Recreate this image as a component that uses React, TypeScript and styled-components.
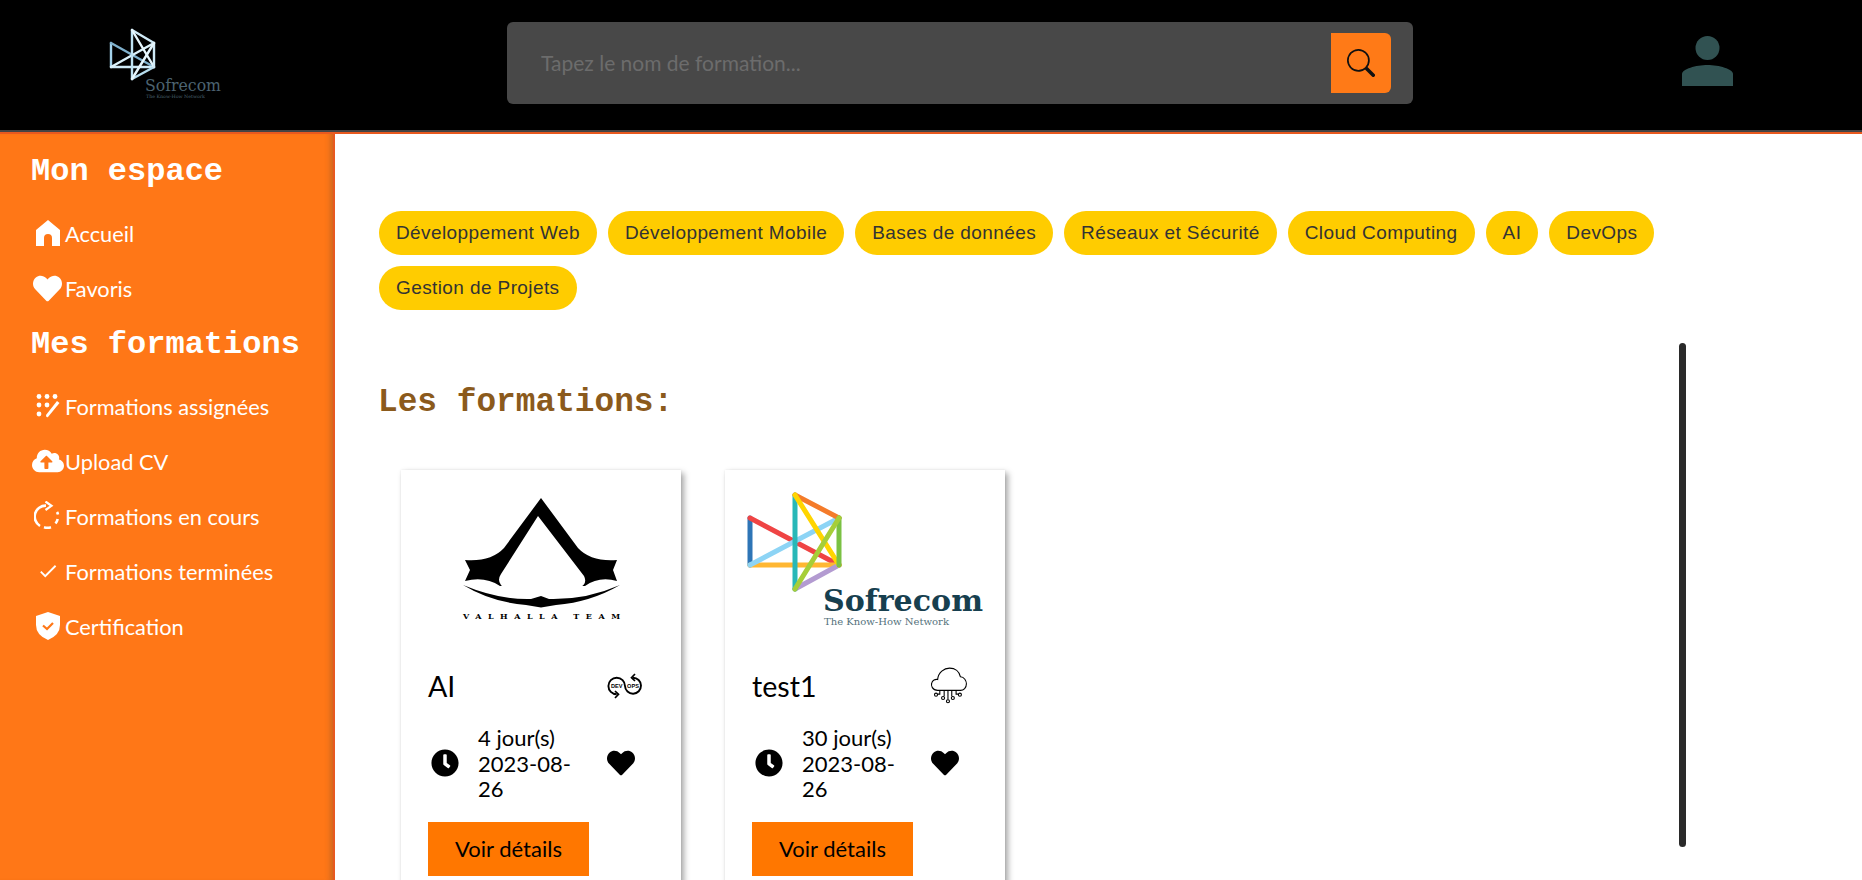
import React from 'react';
import styled, {createGlobalStyle} from 'styled-components';
import {BsSearch} from 'react-icons/bs';
import {FaClock, FaCloudUploadAlt, FaHeart} from 'react-icons/fa';
import {MdCheck} from 'react-icons/md';

const GlobalStyle = createGlobalStyle`
	html, body {
		margin   : 0;
		padding  : 0;
		height   : 880px;
		overflow : hidden;
		background-color : #fff;
		font-family : Lato, "Open Sans", sans-serif;
	}
`;

const Page = styled.div`
	display        : flex;
	flex-direction : column;
	height         : 880px;
	overflow       : hidden;
`;
const Header = styled.header`
	display               : grid;
	grid-template-columns : 507px 906px 1fr;
	align-items           : center;
	flex-shrink           : 0;
	height                : 130px;
	background-color      : #000;
	border-bottom         : 2px solid #444;
`;
const HeaderLogo = styled.svg`
	display     : block;
	margin-left : 105px;
	width       : 125px;
	height      : 75px;
	margin-top  : -4px;
`;
const SearchBar = styled.div`
	display          : flex;
	align-items      : center;
	justify-content  : space-between;
	height           : 82px;
	padding          : 0 22px 0 32px;
	background-color : #484848;
	border-radius    : 6px;
	margin-top       : -5px;
`;
const SearchInput = styled.input`
	flex             : 1;
	border           : 0;
	outline          : none;
	background-color : transparent;
	font-family      : Lato, sans-serif;
	font-size        : 21px;
	color            : #eee;
	&::placeholder {
		color : #6c6c6c;
	}
`;
const SearchButton = styled.button`
	display          : flex;
	align-items      : center;
	justify-content  : center;
	width            : 60px;
	height           : 60px;
	padding          : 0;
	border           : 0;
	border-radius    : 0 6px 6px 0;
	background-color : #ff7a17;
	color            : #111;
`;
const ProfileSlot = styled.div`
	padding-left : 269px;
	display      : flex;
	margin-top   : -8px;
`;
const Body = styled.div`
	display    : flex;
	flex       : 1;
	min-height : 0;
	border-top : 2px solid #e8591f;
`;
const SideMenu = styled.aside`
	flex-shrink      : 0;
	width            : 333px;
	padding-top      : 10px;
	background-color : #ff7717;
	border-right     : 2px solid #e8591f;
	box-shadow       : inset -7px 0 6px -5px rgba(60, 60, 60, 0.3);
`;
const MenuTitle = styled.h2`
	display      : flex;
	align-items  : center;
	height       : 55px;
	margin       : 0 0 8px;
	padding-left : 31px;
	font-family  : "Liberation Mono", monospace;
	font-weight  : 700;
	font-size    : 32px;
	color        : #fff;
`;
const MenuRow = styled.div`
	display     : grid;
	grid-template-columns : 35px 1fr;
	align-items : center;
	box-sizing  : border-box;
	height      : 55px;
	padding     : 0 0 3px 30px;
	font-size   : 21.8px;
	color       : #fff;
`;
const MenuIcon = styled.span`
	display         : flex;
	align-items     : center;
	justify-content : center;
	color           : #fff;
`;
const Content = styled.main`
	position : relative;
	flex     : 1;
	overflow : hidden;
	padding  : 77px 0 0 44px;
`;
const Chips = styled.div`
	display   : flex;
	flex-wrap : wrap;
	gap       : 11px;
	width     : 1300px;
`;
const Chip = styled.span`
	display          : inline-flex;
	align-items      : center;
	height           : 44px;
	padding          : 0 17px;
	border-radius    : 22px;
	background-color : #fc0;
	font-family      : "Liberation Sans", Arial, sans-serif;
	font-size        : 19px;
	letter-spacing   : 0.4px;
	color            : #333;
`;
const SectionTitle = styled.h2`
	margin      : 73px 0 0 -1px;
	height      : 40px;
	line-height : 40px;
	font-family : "Liberation Mono", monospace;
	font-weight : 700;
	font-size   : 32.8px;
	color       : #8b5a1c;
`;
const Cards = styled.div`
	display     : flex;
	gap         : 44px;
	margin-left : 22px;
	margin-top  : 47px;
`;
const Card = styled.article`
	flex-shrink : 0;
	width       : 280px;
	height      : 430px;
	background-color : #fff;
	box-shadow  : 3px 3px 6px rgba(0, 0, 0, 0.35), 0 0 2px rgba(0, 0, 0, 0.08);
`;
const CardImage = styled.svg`
	display : block;
	width   : 280px;
	height  : 185px;
`;
const CardLine = styled.div`
	display         : flex;
	align-items     : center;
	justify-content : space-between;
	height          : 64px;
	padding         : 0 38px 2px 27px;
	box-sizing      : border-box;
`;
const CardTitle = styled.div`
	font-size : 28.6px;
	color     : #000;
`;
const CardInfo = styled.div`
	display     : grid;
	grid-template-columns : 30px 106px 1fr;
	column-gap  : 17px;
	align-items : center;
	margin-top  : 6px;
	padding     : 0 0 0 30px;
	font-size   : 22px;
	line-height : 25.5px;
	color       : #000;
`;
const InfoText = styled.div`
	width : 106px;
`;
const HeartSlot = styled.span`
	display      : flex;
	padding-left : 6px;
`;
const DetailButton = styled.button`
	display          : block;
	width            : 161px;
	height           : 54px;
	margin           : 20px 0 0 27px;
	border           : 0;
	background-color : #ff7700;
	font-family      : Lato, sans-serif;
	font-size        : 22px;
	color            : #000;
`;
const ScrollThumb = styled.div`
	position         : absolute;
	left             : 1344px;
	top              : 209px;
	width            : 7px;
	height           : 504px;
	border-radius    : 4px;
	background-color : #2a2a2a;
`;

const CHIPS = ['Développement Web', 'Développement Mobile', 'Bases de données', 'Réseaux et Sécurité', 'Cloud Computing', 'AI', 'DevOps', 'Gestion de Projets'];

const HomeIcon = () => <svg width="24" height="26" viewBox="0 0 24 26">
	<path fill="currentColor" d="M12 0 L24 10 V26 H16 V18 Q16 14 12 14 Q8 14 8 18 V26 H0 V10 Z"/>
</svg>;
const AssignedIcon = () => <svg width="24" height="24" viewBox="0 0 24 24" fill="currentColor">
	<circle cx="3" cy="2.5" r="2.4"/><circle cx="11" cy="2.5" r="2.4"/><circle cx="19" cy="2.5" r="2.4"/>
	<circle cx="3" cy="11" r="2.4"/><circle cx="11" cy="11" r="2.4"/>
	<circle cx="3" cy="20" r="2.4"/>
	<path d="M21 7 L23.5 9 L12 23 Q10 24 10 21 Z"/>
</svg>;
const LoopIcon = () => <svg width="27" height="30" viewBox="0 0 27 30" fill="none" stroke="currentColor" strokeWidth="2.6">
	<path d="M12 4.6 A11 11 0 0 0 6 25"/>
	<path d="M10 26.2 A11 11 0 0 0 17 26.2"/>
	<path d="M21.5 22.5 A11 11 0 0 0 23.7 18"/>
	<path d="M24 13.5 A11 11 0 0 0 23 11"/>
	<path d="M11.5 0.5 L17.5 4.8 L11.5 9" strokeWidth="2.2"/>
</svg>;
const ShieldIcon = () => <svg width="24" height="28" viewBox="0 0 24 28">
	<path fill="currentColor" d="M12 0 L24 4 V13 Q24 23 12 28 Q0 23 0 13 V4 Z"/>
	<path fill="none" stroke="#ff7717" strokeWidth="2.2" d="M7 13.5 L11 17 L17 11"/>
</svg>;
const ProfileIcon = () => <svg width="51" height="50" viewBox="0 0 51 50" fill="#315252">
	<circle cx="25.5" cy="12" r="12"/>
	<path d="M0 50 V38 C0 33 14 29 25.5 29 C37 29 51 33 51 38 V50 Z"/>
</svg>;

const NODES_HEADER = {a: [132, 29], b: [154, 42], c: [154, 66], d: [132, 78], e: [111, 42], f: [111, 66]};
const NODES_CARD = {a: [70, 25], b: [114, 48], c: [114, 95], d: [70, 119], e: [25, 48], f: [25, 95]};
const EDGES: Array<[keyof typeof NODES_CARD, keyof typeof NODES_CARD, string, string]> = [
	['e', 'f', '#2e75b6', '#a4d3ec'],
	['e', 'c', '#ef4444', '#7fb0cc'],
	['f', 'c', '#ffb733', '#cfeaf7'],
	['f', 'b', '#8dd4f5', '#dcf2fb'],
	['d', 'c', '#b39bd1', '#b5dcee'],
	['a', 'd', '#28b8b8', '#bfe3f3'],
	['a', 'b', '#f47b2a', '#cfeaf7'],
	['a', 'c', '#ffd500', '#e6f6fd'],
	['b', 'c', '#7ac143', '#cfeaf7'],
	['b', 'd', '#a6ce39', '#e6f6fd']
];

const SofrecomMark = (props: { nodes: typeof NODES_CARD; mono?: boolean; width: number }) => {
	const {nodes, mono, width} = props;
	return <g strokeLinecap="round" strokeWidth={width}>
		{EDGES.map(([from, to, color, pale]) => <line key={from + to}
			x1={nodes[from][0]} y1={nodes[from][1]} x2={nodes[to][0]} y2={nodes[to][1]}
			stroke={mono ? pale : color}/>)}
	</g>;
};

const ValhallaImage = () => <CardImage viewBox="0 0 280 185">
	<path d="M140 28 L177 78 Q190 92 216 90 L212 100 L216 111 Q198 106 184 116 L99 116 Q84 106 64 111 L69 100 L64 90 Q90 92 103 78 Z"/>
	<path fill="#fff" d="M137 46 L183 106 Q187 114 178 118 Q160 127 144 128 L140 126 L134 128 Q118 127 106 120 Q94 113 100 104 Z"/>
	<path d="M62 115 Q98 130 130 129 L140 126 L148 129 Q185 130 219 115 Q190 132 155 135 L140 137.5 L125 135 Q90 132 62 115 Z"/>
	<text x="62" y="149" textLength="157" fontFamily="DejaVu Serif, serif" fontWeight="700" fontSize="8">VALHALLA TEAM</text>
</CardImage>;

const SofrecomImage = () => <CardImage viewBox="0 0 280 185">
	<SofrecomMark nodes={NODES_CARD} width={5}/>
	<text x="98" y="141" textLength="160" lengthAdjust="spacingAndGlyphs" fontFamily="DejaVu Serif, serif" fontWeight="700" fontSize="30" fill="#173f4f">Sofrecom</text>
	<text x="99" y="155" textLength="125" lengthAdjust="spacingAndGlyphs" fontFamily="DejaVu Serif, serif" fontSize="9.5" fill="#54727c">The Know-How Network</text>
</CardImage>;

const DevOpsIcon = () => <svg width="36" height="26" viewBox="0 0 36 26" fill="none" stroke="#000" strokeWidth="1.9">
	<path d="M9.7 21.3 A8.3 8.3 0 1 1 18 13 A8 8 0 1 0 26 4.7"/>
	<path d="M8 18 L11.5 21.3 L8 25 M28 1 L24.5 4.7 L28 8" strokeWidth="1.7"/>
	<text x="9.7" y="15" textAnchor="middle" fontFamily="Liberation Sans, sans-serif" fontWeight="700" fontSize="5.6" fill="#000" stroke="none">DEV</text>
	<text x="26" y="15" textAnchor="middle" fontFamily="Liberation Sans, sans-serif" fontWeight="700" fontSize="5.6" fill="#000" stroke="none">OPS</text>
</svg>;
const CloudIcon = () => <svg width="37" height="38" viewBox="0 0 34 35" fill="none" stroke="#000" strokeWidth="1">
	<path d="M7 21.5 C2 21.5 0.8 17 1.5 15 C2 12 5 11 7 11.5 C7.5 5 13 1 18 1 C23 1 27 4 28 9 C31.5 9 33.5 13 33.5 15.5 C33.5 19 31 21.5 28 21.5 Z"/>
	<path d="M9 21.5 V25 H7 M13 21.5 V27 M16.5 21.5 V30 M20 21.5 V27 M24 21.5 V25 H26"/>
	<circle cx="5.5" cy="25.5" r="1.4"/><circle cx="12" cy="28.5" r="1.4"/><circle cx="16.5" cy="31.5" r="1.4"/><circle cx="21" cy="28.5" r="1.4"/><circle cx="27.5" cy="25.5" r="1.4"/>
</svg>;

const FormationCard = (props: { title: string; duration: string; image: React.ReactNode; icon: React.ReactNode }) => {
	const {title, duration, image, icon} = props;
	return <Card>
		{image}
		<CardLine>
			<CardTitle>{title}</CardTitle>
			{icon}
		</CardLine>
		<CardInfo>
			<FaClock size={28}/>
			<InfoText>{duration} 2023-08-26</InfoText>
			<HeartSlot><FaHeart size={28}/></HeartSlot>
		</CardInfo>
		<DetailButton>Voir détails</DetailButton>
	</Card>;
};

export default function App() {
	return <Page>
		<GlobalStyle/>
		<Header>
			<HeaderLogo viewBox="105 25 125 75">
				<SofrecomMark nodes={NODES_HEADER} mono width={2.4}/>
				<text x="145" y="90" textLength="76" lengthAdjust="spacingAndGlyphs" fontFamily="DejaVu Serif, serif" fontSize="16" fill="#4c6370">Sofrecom</text>
				<text x="146" y="97" textLength="59" lengthAdjust="spacingAndGlyphs" fontFamily="DejaVu Serif, serif" fontSize="4.5" fill="#4c6370">The Know-How Network</text>
			</HeaderLogo>
			<SearchBar>
				<SearchInput placeholder="Tapez le nom de formation..."/>
				<SearchButton><BsSearch size={28}/></SearchButton>
			</SearchBar>
			<ProfileSlot><ProfileIcon/></ProfileSlot>
		</Header>
		<Body>
			<SideMenu>
				<MenuTitle>Mon espace</MenuTitle>
				<MenuRow><MenuIcon><HomeIcon/></MenuIcon>Accueil</MenuRow>
				<MenuRow><MenuIcon><FaHeart size={29}/></MenuIcon>Favoris</MenuRow>
				<MenuTitle>Mes formations</MenuTitle>
				<MenuRow><MenuIcon><AssignedIcon/></MenuIcon>Formations assignées</MenuRow>
				<MenuRow><MenuIcon><FaCloudUploadAlt size={32}/></MenuIcon>Upload CV</MenuRow>
				<MenuRow><MenuIcon><LoopIcon/></MenuIcon>Formations en cours</MenuRow>
				<MenuRow><MenuIcon><MdCheck size={22}/></MenuIcon>Formations terminées</MenuRow>
				<MenuRow><MenuIcon><ShieldIcon/></MenuIcon>Certification</MenuRow>
			</SideMenu>
			<Content>
				<Chips>{CHIPS.map(chip => <Chip key={chip}>{chip}</Chip>)}</Chips>
				<SectionTitle>Les formations:</SectionTitle>
				<Cards>
					<FormationCard title="AI" duration="4 jour(s)" image={<ValhallaImage/>} icon={<DevOpsIcon/>}/>
					<FormationCard title="test1" duration="30 jour(s)" image={<SofrecomImage/>} icon={<CloudIcon/>}/>
				</Cards>
				<ScrollThumb/>
			</Content>
		</Body>
	</Page>;
}
